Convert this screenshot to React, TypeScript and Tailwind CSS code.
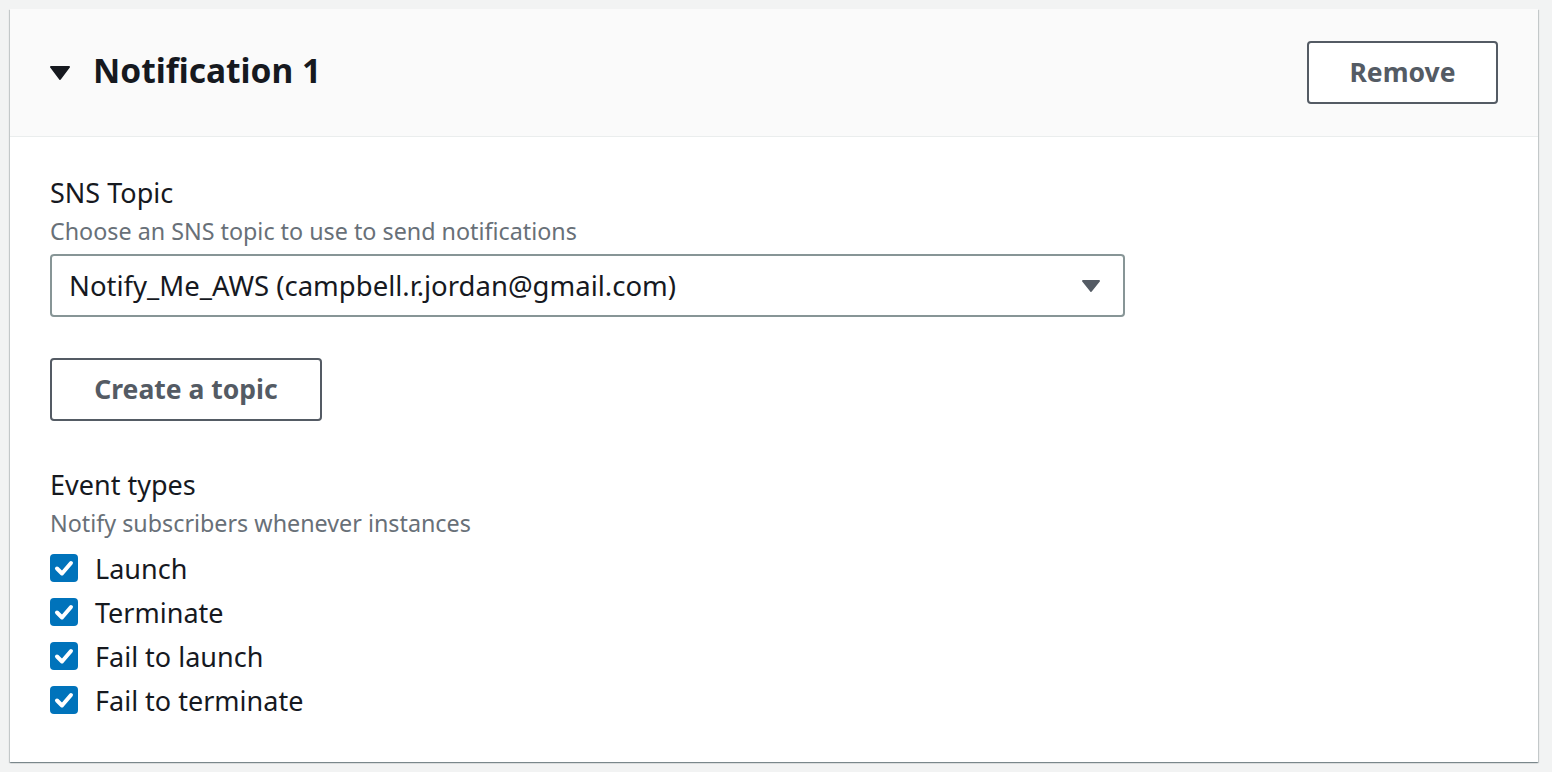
const events = ["Launch", "Terminate", "Fail to launch", "Fail to terminate"];

export default function App() {
  return (
    <div
      className="min-h-screen bg-[#f2f3f3] px-[10px] pt-[9px] pb-[10px]"
      style={{ fontFamily: '"Noto Sans", "Open Sans", Arial, sans-serif' }}
    >
      <div className="w-[1528px] bg-white shadow-[0_1px_1px_0_rgba(0,28,36,0.3),1px_1px_1px_0_rgba(0,28,36,0.15),-1px_1px_1px_0_rgba(0,28,36,0.15)]">
        {/* Header */}
        <div className="flex h-[128px] items-center justify-between border-b border-[#eaeded] bg-[#fafafa] pl-[40px] pr-[40px]">
          <div className="flex items-center">
            <svg width="20" height="16" viewBox="0 0 20 16" className="mr-[23px]">
              <path d="M1 2 L19 2 L10 14 Z" fill="#16191f" stroke="#16191f" strokeWidth="2" strokeLinejoin="round" />
            </svg>
            <h2 className="-mt-[3px] text-[33.5px] font-bold leading-none text-[#16191f]">Notification 1</h2>
          </div>
          <button className="h-[63px] w-[191px] rounded-[4px] border-2 border-[#545b64] bg-white text-[26.5px] font-bold text-[#545b64]">
            Remove
          </button>
        </div>

        {/* Body */}
        <div className="px-[40px] pt-[39px] pb-[48px]">
          <div className="text-[27px] leading-[34px] text-[#16191f]">SNS Topic</div>
          <div className="mt-[6px] text-[23.3px] leading-[30px] text-[#687078]">
            Choose an SNS topic to use to send notifications
          </div>
          <div className="mt-[8px] flex h-[63px] w-[1075px] items-center justify-between rounded-[4px] border-2 border-[#879596] pl-[17px] pr-[22px]">
            <span className="text-[27.5px] leading-none text-[#16191f]">Notify_Me_AWS (campbell.r.jordan@gmail.com)</span>
            <svg width="20" height="16" viewBox="0 0 20 16">
              <path d="M2 3 L18 3 L10 13 Z" fill="#545b64" stroke="#545b64" strokeWidth="2" strokeLinejoin="round" />
            </svg>
          </div>

          <button className="mt-[41px] h-[63px] w-[272px] rounded-[4px] border-2 border-[#545b64] bg-white text-[26.5px] font-bold text-[#545b64]">
            Create a topic
          </button>

          <div className="mt-[47px] text-[27px] leading-[34px] text-[#16191f]">Event types</div>
          <div className="mt-[6px] text-[23.3px] leading-[30px] text-[#687078]">
            Notify subscribers whenever instances
          </div>
          <div className="mt-[16px] flex flex-col gap-[16px]">
            {events.map((e) => (
              <label key={e} className="flex h-[28px] items-center">
                <span className="flex h-[28px] w-[28px] items-center justify-center rounded-[4px] bg-[#0073bb]">
                  <svg width="28" height="28" viewBox="0 0 28 28">
                    <polyline
                      points="7,14.5 12,19.5 21,9"
                      fill="none"
                      stroke="white"
                      strokeWidth="4"
                      strokeLinecap="round"
                      strokeLinejoin="round"
                    />
                  </svg>
                </span>
                <span className="ml-[17px] text-[27px] leading-none text-[#16191f]">{e}</span>
              </label>
            ))}
          </div>
        </div>
      </div>
    </div>
  );
}
